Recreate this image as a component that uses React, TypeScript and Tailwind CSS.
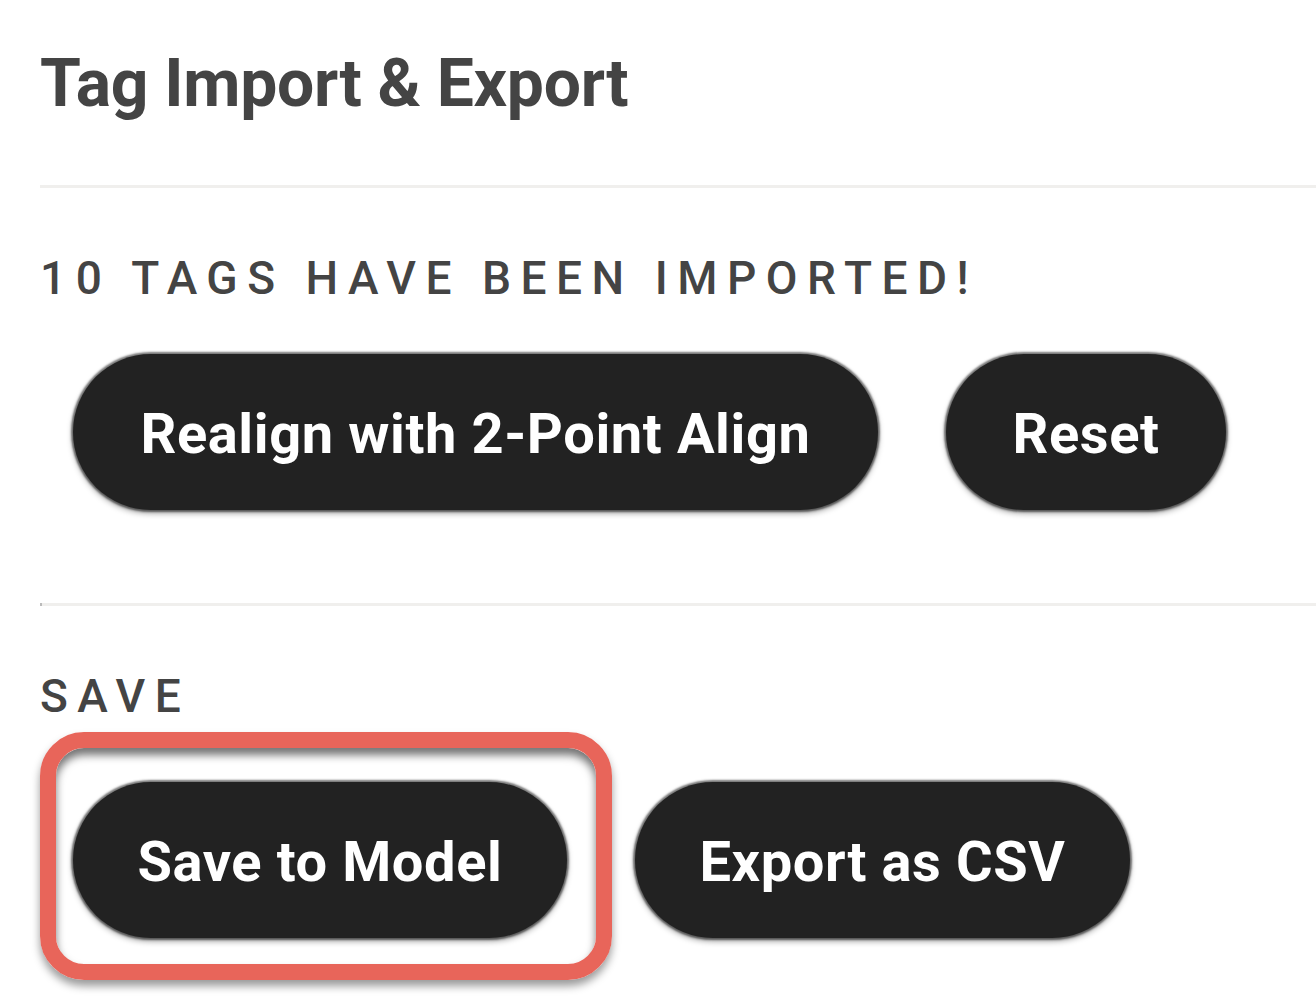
const font = { fontFamily: "Roboto, 'Noto Sans', sans-serif" };

function PillButton({ label, className = "" }: { label: string; className?: string }) {
  return (
    <button
      className={`h-[156px] rounded-full bg-[#222222] text-white font-bold text-[56px] leading-[60px] pt-[3px] tracking-[0.6px] shadow-[0_0_2px_2px_rgba(0,0,0,0.5),0_3px_6px_rgba(0,0,0,0.4)] ${className}`}
    >
      {label}
    </button>
  );
}

export default function App() {
  return (
    <div className="w-[1316px] h-[998px] bg-white overflow-hidden text-[#444444]" style={font}>
      <div className="pl-[40px]">
        <h1 className="pt-[44px] text-[66px] leading-[80px] font-bold tracking-[-0.3px]">Tag Import &amp; Export</h1>

        <div className="mt-[61px] h-[3px] bg-[#f0efed]" />

        <div className="mt-[62px] text-[46px] leading-[56px] font-medium tracking-[0.207em] uppercase">
          10 Tags have been imported!
        </div>

        <div className="mt-[48px] pl-[33px] flex gap-[68px]">
          <PillButton label="Realign with 2-Point Align" className="w-[805px]" />
          <PillButton label="Reset" className="w-[280px]" />
        </div>

        <div className="mt-[93px] h-[3px] bg-[#f0efed] border-l-2 border-[#bbbbbb]" />

        <div className="mt-[62px] text-[46px] leading-[56px] font-medium tracking-[0.207em] uppercase">Save</div>

        <div className="mt-[58px] pl-[33px] flex gap-[68px]">
          <div className="relative">
            <div className="absolute left-[-33px] top-[-50px] right-[-45px] bottom-[-42px] rounded-[44px] border-[16px] border-[#e8655a] shadow-[0_6px_8px_rgba(0,0,0,0.4),inset_0_7px_8px_rgba(0,0,0,0.55)]" />
            <PillButton label="Save to Model" className="w-[494px] relative" />
          </div>
          <PillButton label="Export as CSV" className="w-[495px]" />
        </div>
      </div>
    </div>
  );
}
